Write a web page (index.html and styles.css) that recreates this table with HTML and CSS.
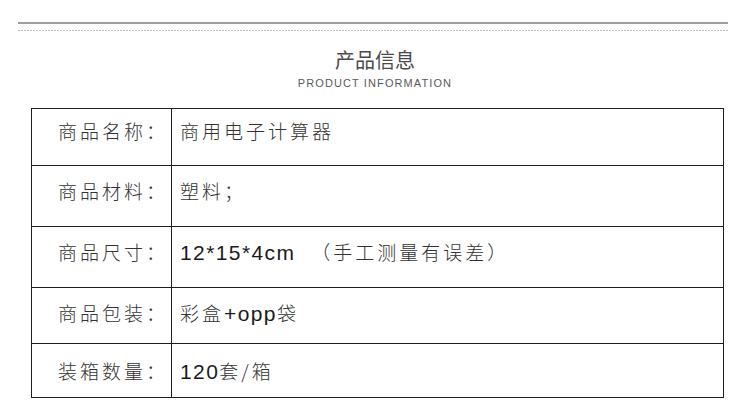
FILE: index.html
```html
<!DOCTYPE html>
<html lang="zh">
<head>
<meta charset="utf-8">
<title>产品信息</title>
<link rel="stylesheet" href="styles.css">
</head>
<body>
<div class="page">
  <div class="rule"></div>
  <div class="dots"></div>
  <div class="heading">
    <div class="title">产品信息</div>
    <div class="subtitle">PRODUCT INFORMATION</div>
  </div>
  <div class="spec">
    <div class="cell label r1">商品名称：</div>
    <div class="cell value r1">商用电子计算器</div>
    <div class="cell label">商品材料：</div>
    <div class="cell value">塑料；</div>
    <div class="cell label">商品尺寸：</div>
    <div class="cell value"><span class="lat">12*15*4cm</span><span class="gap"></span>（手工测量有误差）</div>
    <div class="cell label">商品包装：</div>
    <div class="cell value">彩盒<span class="lat">+opp</span>袋</div>
    <div class="cell label last">装箱数量：</div>
    <div class="cell value last"><span class="lat">120</span>套/箱</div>
  </div>
</div>
</body>
</html>
```
FILE: styles.css
```css
html, body {
  margin: 0;
  padding: 0;
  background: #ffffff;
}

.page {
  width: 750px;
  height: 414px;
  padding-top: 22px;
  box-sizing: border-box;
  font-family: "Noto Sans CJK SC", "Liberation Sans", sans-serif;
}

.rule {
  margin: 0 22px 0 18px;
  height: 2px;
  background: #9e9e9e;
}

.dots {
  margin: 6px 22px 0 18px;
  height: 1px;
  background: repeating-linear-gradient(to right, #bdbdbd 0 2px, transparent 2px 3px);
}

.heading {
  display: flex;
  flex-direction: column;
  align-items: center;
  margin-top: 17px;
}

.title {
  font-size: 20px;
  line-height: 24px;
  color: #4a4a4a;
  font-weight: 400;
}

.subtitle {
  margin-top: 4px;
  font-family: "Liberation Sans", "Noto Sans CJK SC", sans-serif;
  font-size: 11px;
  line-height: 14px;
  letter-spacing: 1.1px;
  color: #5a5a5a;
}

.spec {
  display: grid;
  grid-template-columns: 140px 1fr;
  grid-template-rows: 57px 61px 61px 56px 53px;
  margin: 18px 26px 0 31px;
  border: 1px solid #1e1e1e;
}

.cell {
  border-bottom: 1px solid #1e1e1e;
  font-size: 19px;
  line-height: 24px;
  letter-spacing: 3px;
  color: #333333;
  font-weight: 300;
  padding-top: 13px;
  white-space: nowrap;
}

.cell.r1 {
  padding-top: 10px;
}

.cell.last {
  border-bottom: none;
  padding-top: 15px;
}

.label {
  border-right: 1px solid #1e1e1e;
  padding-left: 26px;
}

.value {
  padding-left: 8px;
}

.lat {
  font-family: "Liberation Sans", sans-serif;
  font-size: 21px;
  letter-spacing: 1.4px;
  color: #1a1a1a;
}

.gap {
  display: inline-block;
  width: 16px;
}
```
